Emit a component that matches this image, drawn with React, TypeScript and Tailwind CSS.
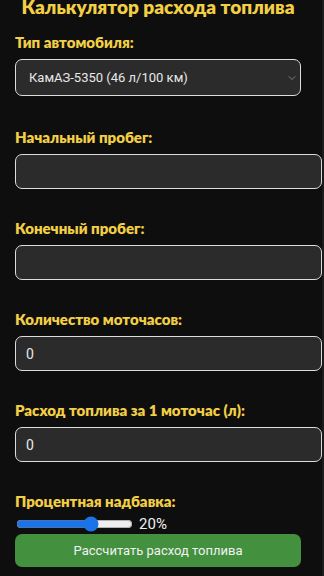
import { useState } from 'react';
import { ChevronDown } from 'lucide-react';

const labelCls = 'block text-[15px] leading-5 font-extrabold text-[#f3cf45]';

function Field({ label, value, onChange }: { label: string; value: string; onChange: (v: string) => void }) {
  return (
    <div className="mb-[29px]">
      <label className={`${labelCls} mb-[7px]`}>{label}</label>
      <input
        type="text"
        value={value}
        onChange={(e) => onChange(e.target.value)}
        className="block h-[35px] w-[307px] rounded-[7px] border-[1.5px] border-[#dcdcdc] bg-[#2b2b2b] px-[10px] font-['Roboto',sans-serif] text-[14px] text-[#e8e8e8] outline-none"
      />
    </div>
  );
}

export default function App() {
  const [car, setCar] = useState('kamaz');
  const [start, setStart] = useState('');
  const [end, setEnd] = useState('');
  const [hours, setHours] = useState('0');
  const [perHour, setPerHour] = useState('0');
  const [extra, setExtra] = useState(20);

  return (
    <div className="flex h-[576px] w-[324px] overflow-hidden bg-[#0e0e0e] font-['Lato','Noto_Sans',sans-serif]">
      <div className="w-[322px] shrink-0 pl-[15px]">
        <div className="w-[286px]">
          <h1 className="mt-[-5px] mb-[13px] text-center text-[19px] leading-6 font-extrabold text-[#f3cf45]">
            Калькулятор расхода топлива
          </h1>

          <div className="mb-[31px]">
            <label className={`${labelCls} mb-[7px]`}>Тип автомобиля:</label>
            <div className="relative">
              <select
                value={car}
                onChange={(e) => setCar(e.target.value)}
                className="block h-[37px] w-full appearance-none rounded-[7px] border-[1.5px] border-[#dcdcdc] bg-[#2b2b2b] pl-[13px] font-['Roboto',sans-serif] text-[13px] text-[#e8e8e8] outline-none"
              >
                <option value="kamaz">КамАЗ-5350 (46 л/100 км)</option>
              </select>
              <ChevronDown
                size={12}
                strokeWidth={1.5}
                className="pointer-events-none absolute top-[13px] right-[3px] text-[#9a9a9a]"
              />
            </div>
          </div>

          <Field label="Начальный пробег:" value={start} onChange={setStart} />
          <Field label="Конечный пробег:" value={end} onChange={setEnd} />
          <Field label="Количество моточасов:" value={hours} onChange={setHours} />
          <Field label="Расход топлива за 1 моточас (л):" value={perHour} onChange={setPerHour} />

          <label className={`${labelCls} mb-[4px]`}>Процентная надбавка:</label>
          <div className="flex h-[18px] items-center gap-[6px]">
            <input
              type="range"
              min={0}
              max={30}
              value={extra}
              onChange={(e) => setExtra(Number(e.target.value))}
              className="m-0 ml-[1px] w-[117px] accent-[#1a73e8]"
            />
            <span className="font-['Roboto',sans-serif] text-[15px] text-[#f0f0f0]">{extra}%</span>
          </div>

          <button
            type="button"
            className="mt-[1px] block h-[33px] w-full rounded-[7px] bg-[#43903f] font-['Roboto',sans-serif] text-[13px] text-[#f2f2f2]"
          >
            Рассчитать расход топлива
          </button>
        </div>
      </div>
      <div className="w-[2px] shrink-0 bg-[#1c1c1c]" />
    </div>
  );
}
